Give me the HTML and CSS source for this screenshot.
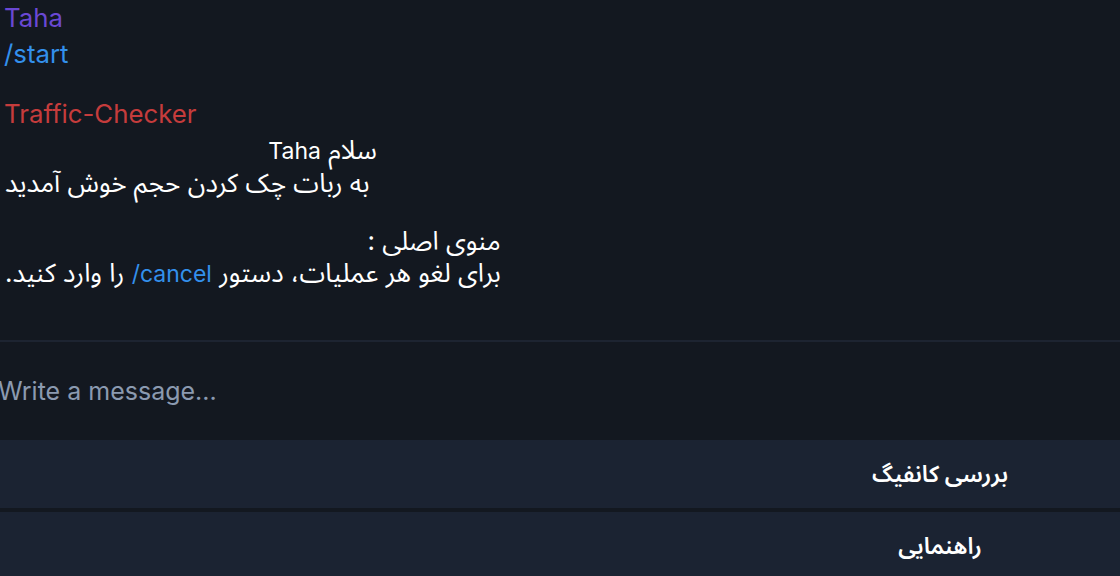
FILE: index.html
```html
<!DOCTYPE html>
<html lang="fa">
<head>
<meta charset="utf-8">
<title>Traffic-Checker</title>
<link rel="stylesheet" href="styles.css">
</head>
<body>
<div class="chat">
  <div class="history">
    <div class="msg">
      <div class="author author-user">Taha</div>
      <div class="cmd">/start</div>
    </div>
    <div class="msg msg-bot">
      <div class="author author-bot">Traffic-Checker</div>
      <div class="para" dir="rtl">سلام <span class="lat">Taha</span><br>&nbsp;به ربات چک کردن حجم خوش آمدید</div>
      <div class="para para-gap" dir="rtl">منوی اصلی :<br>برای لغو هر عملیات، دستور <span class="link lat" dir="ltr">/cancel</span> را وارد کنید.</div>
    </div>
  </div>
  <div class="composer">
    <span class="placeholder">Write a message...</span>
  </div>
  <div class="keyboard">
    <div class="kb-btn">بررسی کانفیگ</div>
    <div class="kb-btn">راهنمایی</div>
  </div>
</div>
</body>
</html>
```

FILE: styles.css
```css
html, body {
  margin: 0;
  padding: 0;
  background: #131820;
  overflow: hidden;
  height: 576px;
}

body {
  font-family: Inter, "Noto Sans Arabic", "DejaVu Sans", sans-serif;
  color: #ffffff;
}

.chat {
  display: flex;
  flex-direction: column;
  width: 1120px;
}

.history {
  height: 342px;
  padding-left: 4px;
  box-sizing: border-box;
  border-bottom: 2px solid #1d2431;
}

.msg {
  display: flex;
  flex-direction: column;
}

.author {
  font-size: 25.8px;
  line-height: 36px;
  height: 36px;
}

.author-user { color: #6a48d3; }
.author-bot { color: #c53c3c; margin-bottom: 2px; }

.cmd {
  color: #3390ec;
  font-size: 25.8px;
  line-height: 36px;
}

.msg-bot {
  margin-top: 24px;
}

.para {
  width: fit-content;
  font-size: 26px;
  line-height: 32px;
  text-align: right;
  margin-left: 1px;
}

.lat {
  font-size: 23px;
}

.para-gap {
  margin-top: 26px;
}

.link { color: #3390ec; }

.composer {
  height: 98px;
  display: flex;
  align-items: center;
  margin-left: -2px;
}

.placeholder {
  font-size: 25px;
  color: #8b9ab0;
}

.keyboard {
  width: 1880px;
  display: flex;
  flex-direction: column;
  gap: 4px;
}

.kb-btn {
  height: 68px;
  background: #1b2332;
  display: flex;
  align-items: center;
  justify-content: center;
  direction: rtl;
  font-size: 23px;
  font-weight: 600;
  color: #ffffff;
}
```
